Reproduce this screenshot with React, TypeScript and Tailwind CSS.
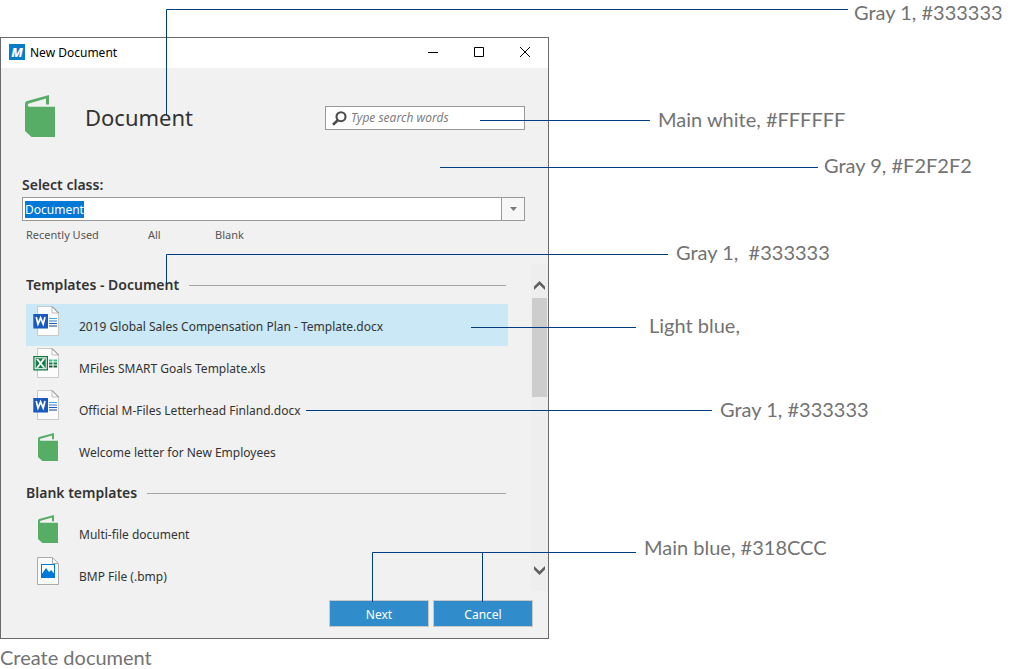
import { useState } from "react";

function BookIcon({ className }: { className?: string }) {
  return (
    <svg viewBox="0 0 30 42" className={className} fill="#58AD66" aria-hidden="true">
      <path
        fillRule="evenodd"
        d="M0 9 C0 7 1 6.300 3 5.800 L24 0 V9.500 H21 V3.600 L4 8.600 C2.400 9.200 2.200 11.800 4.500 11.800 H30 V42 H6.500 L0 36 Z"
      />
    </svg>
  );
}

function Page({ top }: { top: number }) {
  return (
    <g>
      <path d={`M4.500 ${top + 0.5} H19 L25.500 ${top + 7} V${top + 29.5} H4.500 Z`} fill="#FCFCFC" stroke="#C9C9C9" />
      <path d={`M19 ${top + 0.5} V${top + 7} H25.500`} fill="#fff" stroke="#BDBDBD" />
      <path d={`M19 ${top + 0.5} L25.500 ${top + 7}`} stroke="#777" />
    </g>
  );
}

function WordIcon() {
  return (
    <svg viewBox="0 0 28 34" className="h-[34px] w-7" fill="none" aria-hidden="true">
      <Page top={2} />
      <rect x="0.300" y="10" width="14.700" height="14.500" fill="#185ABD" />
      <path d="M3.200 13 L5 20 L7.600 13.800 L10.200 20 L12 13" stroke="#fff" strokeWidth="1.700" />
      <path d="M16 14.500 H24" stroke="#41A5EE" />
      <path d="M16 17 H24" stroke="#2B7CD3" />
      <path d="M16 19.500 H24" stroke="#185ABD" />
      <path d="M16 22 H24" stroke="#103F91" />
    </svg>
  );
}

function ExcelIcon() {
  return (
    <svg viewBox="0 0 28 34" className="h-[34px] w-7" fill="none" aria-hidden="true">
      <Page top={2} />
      <rect x="0.300" y="10" width="14.700" height="14.500" fill="#107C41" />
      <rect x="1.600" y="11.300" width="12.100" height="11.900" fill="#fff" />
      <rect x="2.600" y="12.300" width="10.100" height="9.900" fill="#107C41" />
      <path d="M3 13 H5.300 L12.300 21.700 H10 Z M10 12.600 H12.300 L5.300 21.700 H3 Z" fill="#fff" />
      <path d="M16 14.500 H19.500 M20.500 14.500 H24" stroke="#33C481" strokeWidth="1.800" />
      <path d="M16 17.500 H19.500 M20.500 17.500 H24" stroke="#107C41" strokeWidth="1.800" />
      <path d="M16 20.500 H19.500 M20.500 20.500 H24" stroke="#185C37" strokeWidth="1.800" />
    </svg>
  );
}

function BitmapIcon() {
  return (
    <svg viewBox="0 0 28 34" className="h-[34px] w-7" fill="none" aria-hidden="true">
      <path d="M4.500 3.500 H19.500 L25.500 9.500 V30.500 H4.500 Z" fill="#FAFAFA" stroke="#A8ACB0" />
      <path d="M19.500 3.500 V9.500 H25.500" stroke="#A8ACB0" />
      <rect x="8.500" y="10.500" width="13" height="13" fill="#fff" stroke="#0078D7" />
      <path d="M8.500 20.500 L13 14 L16 18 L18 16 L21.500 20 V23.500 H8.500 Z" fill="#0078D7" />
    </svg>
  );
}

function SmallBook() {
  return (
    <span className="flex h-[34px] w-7 items-start pt-[3px] pl-[5px]">
      <BookIcon className="h-7 w-5" />
    </span>
  );
}

type Item = { name: string; icon: () => React.JSX.Element };

const sections: { title: string; items: Item[] }[] = [
  {
    title: "Templates - Document",
    items: [
      { name: "2019 Global Sales Compensation Plan - Template.docx", icon: WordIcon },
      { name: "MFiles SMART Goals Template.xls", icon: ExcelIcon },
      { name: "Official M-Files Letterhead Finland.docx", icon: WordIcon },
      { name: "Welcome letter for New Employees", icon: SmallBook },
    ],
  },
  {
    title: "Blank templates",
    items: [
      { name: "Multi-file document", icon: SmallBook },
      { name: "BMP File (.bmp)", icon: BitmapIcon },
    ],
  },
];

function TitleBar() {
  return (
    <header className="flex h-[30px] items-center bg-white pl-2">
      <svg viewBox="0 0 16 16" className="mb-[2px] h-4 w-4" aria-hidden="true">
        <rect width="16" height="16" fill="#0A7BC8" />
        <text x="8" y="12.500" textAnchor="middle" fontSize="13" fontWeight="800" fontStyle="italic" fill="#fff">
          M
        </text>
      </svg>
      <h1 className="ml-[5px] flex-1 text-[12px] text-black">New Document</h1>
      <button aria-label="Minimize" className="flex h-full w-[46px] items-center justify-center pb-[2px]">
        <svg viewBox="0 0 10 10" className="h-[10px] w-[10px]" stroke="#000"><path d="M0 5.500 H10" /></svg>
      </button>
      <button aria-label="Maximize" className="flex h-full w-[46px] items-center justify-center pb-[2px]">
        <svg viewBox="0 0 10 10" className="h-[10px] w-[10px]" stroke="#000" fill="none"><path d="M0.500 0.500 H9.500 V9.500 H0.500 Z" /></svg>
      </button>
      <button aria-label="Close" className="flex h-full w-[46px] items-center justify-center pb-[2px]">
        <svg viewBox="0 0 10 10" className="h-[10px] w-[10px]" stroke="#000"><path d="M0 0 L10 10 M10 0 L0 10" /></svg>
      </button>
    </header>
  );
}

function Dialog() {
  const [selected, setSelected] = useState(sections[0].items[0].name);
  return (
    <section className="w-full max-w-[549px] border border-[#6B6B6B] bg-[#F1F1F1] font-['Noto_Sans','Open_Sans',sans-serif] text-[#333333]">
      <TitleBar />
      <div className="flex h-[100px] items-center pr-[23px] pl-6">
        <BookIcon className="mb-1 h-[42px] w-[30px]" />
        <h2 className="ml-[30px] flex-1 pb-[2px] text-[22px]">Document</h2>
        <label className="flex h-6 w-[200px] items-center border border-[#999999] bg-white pl-[6px]">
          <svg viewBox="0 0 15 15" className="h-[15px] w-[15px] shrink-0" fill="none" stroke="#4D4D4D" aria-hidden="true">
            <circle cx="9" cy="5.700" r="4.500" strokeWidth="2.100" />
            <path d="M5.800 9.200 L1 13.800" strokeWidth="2.600" />
          </svg>
          <input
            type="search"
            aria-label="Search"
            placeholder="Type search words"
            className="ml-1 min-w-0 flex-1 text-[12px] outline-none placeholder:text-[#808080] placeholder:italic"
          />
        </label>
      </div>
      <div className="pt-[6px] pr-[23px] pl-[21px]">
        <label htmlFor="doc-class" className="block h-[23px] text-[14px] leading-[22px] font-semibold">
          Select class:
        </label>
        <div className="flex h-6 border border-[#999999] bg-white">
          <div className="flex min-w-0 flex-1 items-center pl-[2px]">
            <button id="doc-class" className="bg-[#0078D7] text-[12px] leading-[17px] text-white">
              Document
            </button>
          </div>
          <button aria-label="Open class list" className="flex w-[23px] items-center justify-center border-l border-[#999999] bg-[#F7F7F7]">
            <svg viewBox="0 0 7 4" className="h-1 w-[7px]" fill="#777"><path d="M0 0 H7 L3.500 4 Z" /></svg>
          </button>
        </div>
        <nav className="flex h-7 items-center pl-1 text-[11px] text-[#555555]">
          <a href="#recent" className="w-[122px]">Recently Used</a>
          <a href="#all" className="w-[67px]">All</a>
          <a href="#blank">Blank</a>
        </nav>
      </div>
      <div className="flex pt-[15px]">
        <div className="min-w-0 flex-1 pr-[23px] pl-[25px]">
          {sections.map((section) => (
            <div key={section.title}>
              <h3 className="flex h-10 items-center gap-[10px] pt-[2px] pr-[2px] text-[14px] font-semibold">
                {section.title}
                <span className="h-px flex-1 bg-[#A6A6A6]" />
              </h3>
              <ul>
                {section.items.map(({ name, icon: Icon }) => (
                  <li key={name}>
                    <button
                      onClick={() => setSelected(name)}
                      className={`flex h-[42px] w-full items-start pl-[7px] text-left ${name === selected ? "bg-[#CAE8F5]" : ""}`}
                    >
                      <Icon />
                      <span className="ml-[18px] text-[12px] leading-[46px]">{name}</span>
                    </button>
                  </li>
                ))}
              </ul>
            </div>
          ))}
        </div>
        <div className="mb-[5px] flex w-[17px] flex-col items-center bg-[#EEEEEE]">
          <button aria-label="Scroll up" className="flex h-[34px] items-end pb-2">
            <svg viewBox="0 0 11 9" className="h-[9px] w-[11px]" fill="#606060"><path d="M0 9 V5.500 L5.500 0 L11 5.500 V9 L5.500 3.800 Z" /></svg>
          </button>
          <div className="h-[99px] w-[15px] bg-[#CDCDCD]" />
          <button aria-label="Scroll down" className="mt-auto flex h-[34px] items-center pb-2">
            <svg viewBox="0 0 11 9" className="h-[9px] w-[11px]" fill="#606060"><path d="M0 0 V3.500 L5.500 9 L11 3.500 V0 L5.500 5.200 Z" /></svg>
          </button>
        </div>
      </div>
      <footer className="flex justify-end gap-1 pt-1 pr-[15px] pb-[11px] text-[12px] text-white">
        <button className="h-[27px] w-[100px] border border-[#C8C8C8] bg-[#318CCC] pt-[2px]">Next</button>
        <button className="h-[27px] w-[100px] border border-[#C8C8C8] bg-[#318CCC] pt-[2px]">Cancel</button>
      </footer>
    </section>
  );
}

const notes = [
  { text: "Gray 1, #333333", place: "left-[854px] top-0" },
  { text: "Main white, #FFFFFF", place: "left-[658px] top-[107px]" },
  { text: "Gray 9, #F2F2F2", place: "left-[824px] top-[153px]" },
  { text: "Gray 1,  #333333", place: "left-[676px] top-[240px]" },
  { text: "Light blue,", place: "left-[649px] top-[313px]" },
  { text: "Gray 1, #333333", place: "left-[720px] top-[397px]" },
  { text: "Main blue, #318CCC", place: "left-[644px] top-[535px]" },
];

export default function App() {
  return (
    <main className="bg-white font-['Lato',sans-serif] text-[20px] leading-6 text-[#737373]">
      <figure className="relative pt-[37px]">
        <Dialog />
        <figcaption className="pt-[6px]">Create document</figcaption>
        <svg
          viewBox="0 0 1020 669"
          width="1020"
          height="669"
          className="pointer-events-none absolute top-0 left-0 max-w-none"
          fill="none"
          stroke="#003C82"
          aria-hidden="true"
        >
          <path d="M166.500 115 V9.500 H848" />
          <path d="M480 120.500 H650" />
          <path d="M440 167.500 H818" />
          <path d="M166.500 284 V254.500 H668" />
          <path d="M471 327.500 H636" />
          <path d="M306 410.500 H712" />
          <path d="M372.500 602 V552.500 H636 M482.500 552.500 V602" />
        </svg>
        {notes.map((note) => (
          <p key={note.place} className={`absolute whitespace-pre ${note.place}`}>
            {note.text}
          </p>
        ))}
      </figure>
    </main>
  );
}
